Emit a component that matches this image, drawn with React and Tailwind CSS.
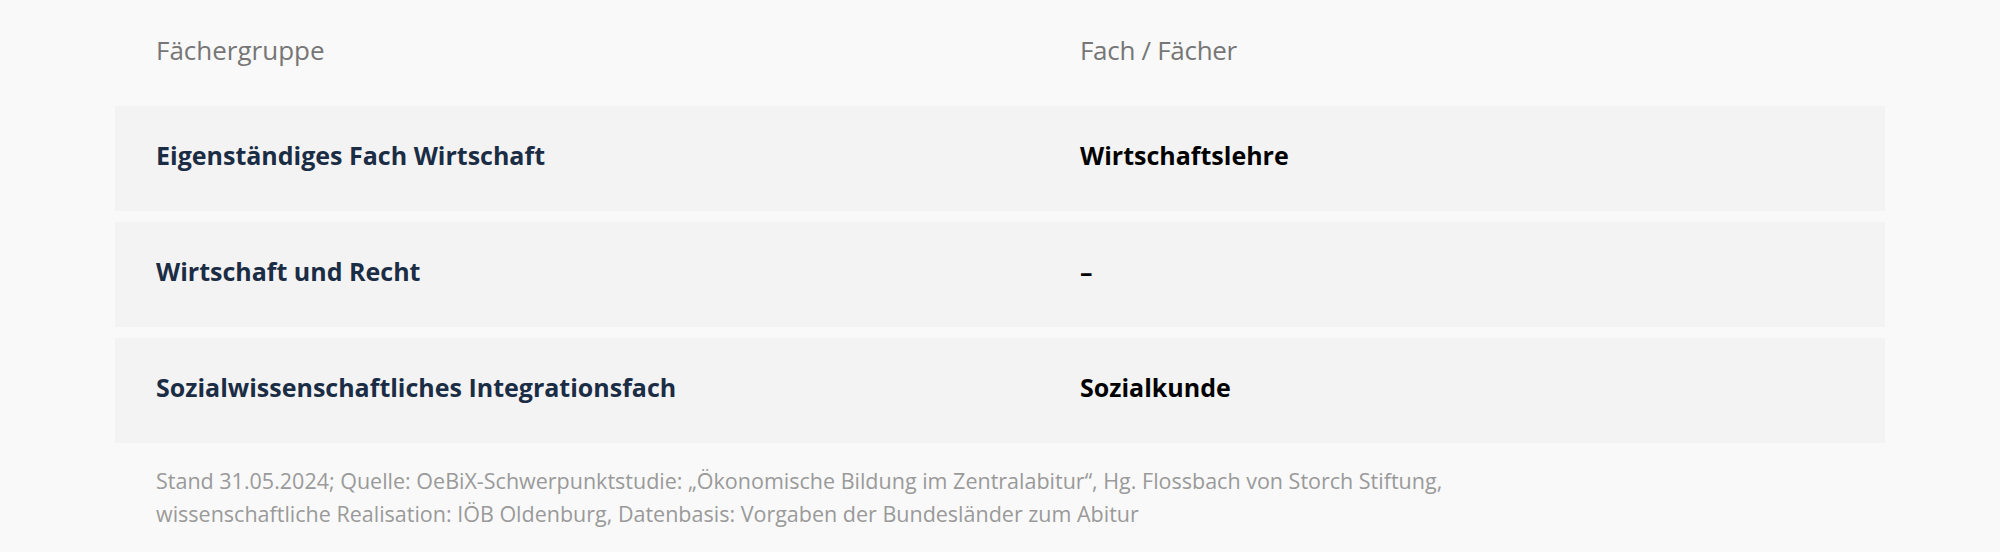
export default function App() {
  const rows = [
    ["Eigenständiges Fach Wirtschaft", "Wirtschaftslehre"],
    ["Wirtschaft und Recht", "–"],
    ["Sozialwissenschaftliches Integrationsfach", "Sozialkunde"],
  ];
  return (
    <div className="min-h-[552px] w-full bg-[#f9f9f9] font-['Open_Sans',sans-serif]">
      <div className="mx-[115px]">
        <div className="grid h-[106px] grid-cols-[924px_1fr] items-center pb-[6px] pl-[41px] text-[26px] text-[#767676]">
          <div>Fächergruppe</div>
          <div className="tracking-[-0.3px]">Fach / Fächer</div>
        </div>
        <div className="flex flex-col gap-[11px]">
          {rows.map((r, i) => (
            <div
              key={i}
              className="grid h-[105px] grid-cols-[924px_1fr] items-center bg-[#f3f3f3] pb-[6px] pl-[41px] text-[25px] font-bold"
            >
              <div className="text-[#1b2d45]">{r[0]}</div>
              <div className="text-black">{r[1]}</div>
            </div>
          ))}
        </div>
        <div className="mt-[21px] pl-[41px] text-[21.5px] leading-[33px] text-[#9a9a9a]">
          Stand 31.05.2024; Quelle: OeBiX-Schwerpunktstudie: „Ökonomische Bildung im Zentralabitur“, Hg. Flossbach von Storch Stiftung,
          <br />
          wissenschaftliche Realisation: IÖB Oldenburg, Datenbasis: Vorgaben der Bundesländer zum Abitur
        </div>
      </div>
    </div>
  );
}
